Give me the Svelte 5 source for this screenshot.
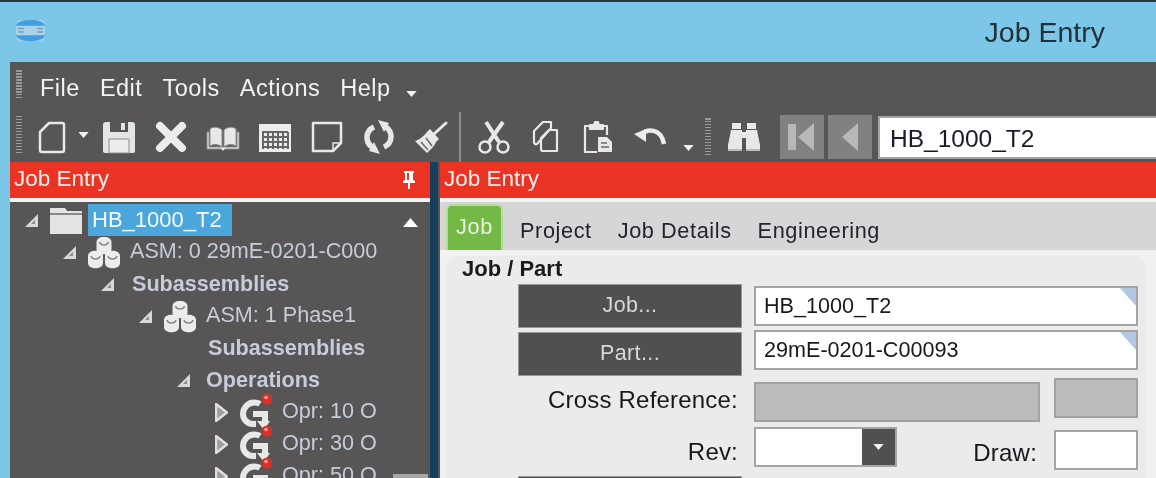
<script>
	const menus = ['File', 'Edit', 'Tools', 'Actions', 'Help'];
	const tabs = ['Project', 'Job Details', 'Engineering'];

	// indent = left edge of the row content, in px from the panel
	const tree = [
		{ indent: 15, arrow: 'open', icon: 'folder', label: 'HB_1000_T2', selected: true },
		{ indent: 53, arrow: 'open', icon: 'asm', label: 'ASM: 0 29mE-0201-C000' },
		{ indent: 91, arrow: 'open', label: 'Subassemblies', bold: true },
		{ indent: 129, arrow: 'open', icon: 'asm', label: 'ASM: 1 Phase1' },
		{ indent: 167, arrow: 'none', label: 'Subassemblies', bold: true },
		{ indent: 167, arrow: 'open', label: 'Operations', bold: true, tight: true },
		{ indent: 205, arrow: 'closed', icon: 'opr', label: 'Opr: 10 O' },
		{ indent: 205, arrow: 'closed', icon: 'opr', label: 'Opr: 30 O' },
		{ indent: 205, arrow: 'closed', icon: 'opr', label: 'Opr: 50 O' }
	];
</script>

{#snippet caret()}
	<svg class="caret" viewBox="0 0 12 7"><path d="M0 0h12L6 7z" fill="#f2f2f2" /></svg>
{/snippet}

{#snippet grip(cls)}
	<span class="grip {cls}"></span>
{/snippet}

{#snippet cup(x, y)}
	<path d="M{x} {y + 5}c0-7 15-7 15 0v7c0 7-15 7-15 0z" fill="#ececec" />
	<path d="M{x + 3} {y + 5}c1 4 8 4 9 0" fill="none" stroke="#8b8b8b" stroke-width="1.500" />
{/snippet}

{#snippet asmIcon()}
	<svg class="ticon asm" viewBox="0 0 32 32">
		{@render cup(8.500, 0)}
		{@render cup(0, 14)}
		{@render cup(17, 14)}
	</svg>
{/snippet}

{#snippet folderIcon()}
	<svg class="ticon folder" viewBox="0 0 32 28">
		<path d="M0 2h15l2 3h15v23H0z" fill="#e4e4e4" />
		<path d="M0 8h32" stroke="#6b6b6b" stroke-width="1.500" />
	</svg>
{/snippet}

{#snippet oprIcon()}
	<svg class="ticon opr" viewBox="0 0 32 38">
		<path d="M20 11c-1.500-1-3-1.500-6-1.500C8 9.500 3 15 3 21s5 10 10 10h3" fill="none" stroke="#e8e8e8" stroke-width="6" />
		<path d="M13 18h15v10l2 0-6 9-7-9h5v-4h-9z" fill="#e8e8e8" />
		<circle cx="27" cy="6" r="5.500" fill="#d5322b" />
		<circle cx="26" cy="4.500" r="1.800" fill="#f3a5a0" />
	</svg>
{/snippet}

<div class="window">
	<header class="titlebar">
		<svg class="appicon" viewBox="0 0 32 26">
			<rect x="1" y="2" width="30" height="22" rx="5" fill="#a9d3ea" />
			<path d="M1 8c0-8 30-8 30 0z" fill="#3f9fe0" />
			<path d="M1 18h30c0 8-30 8-30 0z" fill="#3f9fe0" />
			<path d="M3 11h6M3 14.500h6M23 11h6M23 14.500h6" stroke="#7f9db0" stroke-width="1.500" />
		</svg>
		<h1>Job Entry</h1>
	</header>

	<div class="shell">
		<div class="menubar">
			{@render grip('g-menu')}
			<nav>
				{#each menus as m}
					<span>{m}</span>
				{/each}
			</nav>
			<span class="menu-caret">{@render caret()}</span>
		</div>

		<div class="toolbar">
			{@render grip('g-tool')}
			<svg class="ic first" viewBox="0 0 34 34" fill="none" stroke="#e8e8e8" stroke-width="2.500" stroke-linejoin="round">
				<path d="M14 3h13a2 2 0 0 1 2 2v25a2 2 0 0 1-2 2H7a2 2 0 0 1-2-2V12z" />
			</svg>
			<span class="tb-caret">{@render caret()}</span>
			<svg class="ic" viewBox="0 0 34 34">
				<path d="M1 5a3 3 0 0 1 3-3h26a3 3 0 0 1 3 3v26a2 2 0 0 1-2 2H3a2 2 0 0 1-2-2z" fill="#e4e4e4" />
				<path d="M8 2h18v10H8z" fill="#575556" />
				<path d="M19 3h4v7h-4z" fill="#e4e4e4" />
				<path d="M7 19h20v14H7z" fill="#ececec" stroke="#8f8f8f" />
			</svg>
			<svg class="ic" viewBox="0 0 34 34">
				<path d="M6 6l22 22M28 6L6 28" stroke="#ececec" stroke-width="8" stroke-linecap="round" />
			</svg>
			<svg class="ic" viewBox="0 0 34 34" fill="#e8e8e8" stroke="#8d8d8d" stroke-width="1">
				<path d="M16 10C12 6 6 7 4 9v17c3-2 9-2 12 1z" />
				<path d="M18 10c4-4 10-3 12-1v17c-3-2-9-2-12 1z" />
				<path d="M1 12v17h14l2 2 2-2h14V12h-2v15H3V12z" />
			</svg>
			<svg class="ic" viewBox="0 0 34 34">
				<rect x="1" y="4" width="32" height="28" fill="#ececec" />
				<path d="M4 12h26M4 17h26M4 22h26M4 27h26" stroke="#666" stroke-width="2" />
				<path d="M5 12v17M10 12v17M15 12v17M20 12v17M25 12v17M30 12v17" stroke="#666" stroke-width="2" />
			</svg>
			<svg class="ic note" viewBox="0 0 34 34" fill="none" stroke="#e8e8e8" stroke-width="2.500" stroke-linejoin="round">
				<path d="M3 3h28v20l-8 8H3z" />
				<path d="M31 23h-8v8" stroke-width="1.500" />
			</svg>
			<svg class="ic" viewBox="0 0 34 34">
				<path d="M12 7C3 11 3 22 10 27M22 27c9-4 9-15 2-20" fill="none" stroke="#e8e8e8" stroke-width="5.500" />
				<path d="M16 0l11 3-5 9zM18 34L7 31l5-9z" fill="#e8e8e8" />
			</svg>
			<svg class="ic" viewBox="0 0 34 34">
				<path d="M20 14L32 3" stroke="#e8e8e8" stroke-width="3" stroke-linecap="round" />
				<path d="M16 9l9 10-3 3c-2 5-6 8-9 11L1 21c4-1 9-5 12-9z" fill="#e8e8e8" />
				<path d="M7 22l7 8M12 18l6 8" stroke="#6b6b6b" stroke-width="1.500" />
			</svg>
			<span class="sep"></span>
			<svg class="ic" viewBox="0 0 34 34" fill="none" stroke="#e8e8e8" stroke-width="2.500">
				<path d="M9 2l13 20M26 2L12 22" stroke-width="4" />
				<circle cx="8" cy="27" r="5.500" />
				<circle cx="26" cy="27" r="5.500" />
			</svg>
			<svg class="ic" viewBox="0 0 34 34" fill="none" stroke="#e8e8e8" stroke-width="2.200" stroke-linejoin="round">
				<path d="M14 2h8v6L8 24a2 2 0 0 1-3-2V11z" />
				<path d="M20 10h8v21H14a2 2 0 0 1-2-2V18z" />
			</svg>
			<svg class="ic" viewBox="0 0 34 34" fill="none" stroke="#e8e8e8" stroke-width="2.200" stroke-linejoin="round">
				<path d="M9 6H4v26h12" />
				<path d="M21 6h5v9" />
				<path d="M9 9V5h4l1-3h3l1 3h4v4z" fill="#e8e8e8" />
				<path d="M17 17h9l5 5v10H17z" fill="#e8e8e8" stroke="none" />
				<path d="M20 23h6M20 27h8" stroke="#6b6b6b" stroke-width="1.500" />
			</svg>
			<svg class="ic" viewBox="0 0 34 34" fill="none">
				<path d="M8 15c6-7 20-7 23 9" stroke="#ececec" stroke-width="4.500" />
				<path d="M1 14l12-5 0 13z" fill="#ececec" />
			</svg>
			<span class="tb-caret low">{@render caret()}</span>
			{@render grip('g-tool2')}
			<svg class="ic binos" viewBox="0 0 34 34" fill="#e8e8e8">
				<path d="M5 3h9v6H5zM20 3h9v6h-9z" />
				<path d="M4 10h11v21H1v-6zM19 10h11l3 15v6H19z" />
				<path d="M15 12h4v6h-4z" />
				<path d="M1 30h14M19 30h14" stroke="#8d8d8d" stroke-width="1" />
			</svg>
			<button class="nav first-nav" aria-label="First">
				<svg viewBox="0 0 44 44"><path d="M8 9h8v26H8zM34 8v28L18 22z" fill="#b8b8b8" /></svg>
			</button>
			<button class="nav" aria-label="Previous">
				<svg viewBox="0 0 44 44"><path d="M30 8v28L14 22z" fill="#b8b8b8" /></svg>
			</button>
			<div class="search">HB_1000_T2</div>
		</div>

		<div class="panes">
			<aside class="left">
				<div class="pane-head">
					<span>Job Entry</span>
					<svg class="pin" viewBox="0 0 14 19">
						<path d="M2 1h10v2h-1v7l2 1v2H8v6H6v-6H1v-2l2-1V3H2zM5 3v7h2V3z" fill="#fff" />
					</svg>
				</div>
				<div class="tree">
					<svg class="scroll-up" viewBox="0 0 15 9"><path d="M0 9L7.500 0 15 9z" fill="#fff" /></svg>
					<span class="thumb"></span>
					{#each tree as row}
						<div class="row" style="padding-left: {row.indent}px">
							{#if row.arrow === 'open'}
								<svg class="arrow" viewBox="0 0 13 13">
									<path d="M13 0v13H0z" fill="#d8d8d8" />
									<path d="M10 6v4H6z" fill="#8a8a8a" />
								</svg>
							{:else if row.arrow === 'closed'}
								<svg class="arrow closed" viewBox="0 0 13 19">
									<path d="M1 1l11 8.500L1 18z" fill="#9c9c9c" stroke="#e0e0e0" stroke-width="2.500" />
								</svg>
							{:else}
								<span class="arrow"></span>
							{/if}
							{#if row.icon === 'folder'}
								{@render folderIcon()}
							{:else if row.icon === 'asm'}
								{@render asmIcon()}
							{:else if row.icon === 'opr'}
								{@render oprIcon()}
							{/if}
							<span class="label" class:bold={row.bold} class:tight={row.tight} class:selected={row.selected}>{row.label}</span>
						</div>
					{/each}
				</div>
			</aside>

			<div class="divider"></div>

			<main class="right">
				<div class="pane-head">
					<span>Job Entry</span>
				</div>
				<div class="tabs">
					<span class="tab active">Job</span>
					{#each tabs as t}
						<span class="tab">{t}</span>
					{/each}
				</div>
				<section class="group">
					<h2>Job / Part</h2>
					<div class="form">
						<button class="btn">Job...</button>
						<div class="field first-field"><span>HB_1000_T2</span></div>
						<button class="btn">Part...</button>
						<div class="field second-field"><span>29mE-0201-C00093</span></div>
						<span class="cap cross">Cross Reference:</span>
						<div class="split">
							<div class="off wide"></div>
							<div class="off short"></div>
						</div>
						<span class="cap rev">Rev:</span>
						<div class="split">
							<div class="combo">
								<span class="combo-btn">{@render caret()}</span>
							</div>
							<span class="cap draw">Draw:</span>
							<div class="draw-box"></div>
						</div>
						<button class="btn" aria-label="More"></button>
						<div class="field off-field"></div>
					</div>
				</section>
			</main>
		</div>
	</div>
</div>

<style>
	:global(body) {
		margin: 0;
		overflow: hidden;
	}

	.window {
		width: 1156px;
		height: 478px;
		overflow: hidden;
		display: flex;
		flex-direction: column;
		background: #7cc7e8;
		border-top: 2px solid #2e3542;
		box-sizing: border-box;
		font-family: 'Liberation Sans', Arial, sans-serif;
		filter: blur(0.45px);
	}

	.titlebar {
		height: 60px;
		flex: none;
		display: flex;
		align-items: center;
		justify-content: space-between;
		padding: 0 51px 0 15px;
		box-sizing: border-box;
	}

	.appicon {
		width: 31px;
		height: 25px;
		margin-top: -4px;
	}

	h1 {
		margin: 0;
		font-size: 28.500px;
		font-weight: 400;
		color: #23313b;
	}

	.shell {
		flex: 1;
		min-height: 0;
		margin-left: 10px;
		background: #575556;
		display: flex;
		flex-direction: column;
	}

	.menubar {
		height: 50px;
		flex: none;
		display: flex;
		align-items: center;
		position: relative;
		padding-left: 30px;
		box-sizing: border-box;
		color: #f2f3f7;
		font-size: 23.500px;
		letter-spacing: 0.500px;
	}

	nav {
		display: flex;
		gap: 20px;
		margin-top: 2px;
	}

	.menu-caret {
		margin: 14px 0 0 15px;
		display: flex;
	}

	.caret {
		width: 11px;
		height: 6px;
		display: block;
	}

	.grip {
		position: absolute;
		left: 6px;
		width: 6px;
		background: repeating-linear-gradient(to bottom, #9c9a9b 0 1.500px, #575556 1.500px 3px);
	}

	.g-menu {
		top: 8px;
		height: 30px;
	}

	.toolbar {
		height: 50px;
		flex: none;
		display: flex;
		align-items: center;
		position: relative;
		padding-left: 25px;
		box-sizing: border-box;
	}

	.g-tool {
		top: 4px;
		height: 39px;
	}

	.g-tool2 {
		position: static;
		height: 38px;
		flex: none;
		margin: 0 16px 0 11px;
	}

	.ic {
		width: 34px;
		height: 34px;
		flex: none;
		margin-right: 18px;
		margin-top: -1px;
	}

	.ic.first {
		margin-right: 9px;
	}

	.ic.binos {
		margin-right: 19px;
	}

	.tb-caret {
		display: flex;
		margin-right: 13px;
		margin-top: -4px;
	}

	.tb-caret.low {
		margin: 22px 0 0 -2px;
	}

	.sep {
		width: 2px;
		height: 50px;
		flex: none;
		background: #8f8e8e;
		margin: 0 16px 0 -7px;
	}

	.nav {
		width: 44px;
		height: 44px;
		flex: none;
		padding: 0;
		border: none;
		background: #828182;
		margin-right: 4px;
	}

	.nav svg {
		width: 44px;
		height: 44px;
		display: block;
	}

	.search {
		flex: 1;
		height: 43px;
		margin-left: 2px;
		background: #fff;
		border: 2px solid #a5a5a5;
		border-right: none;
		box-sizing: border-box;
		padding-left: 10px;
		line-height: 41px;
		font-size: 24.500px;
		color: #1a1a2a;
	}

	.panes {
		flex: 1;
		min-height: 0;
		display: flex;
	}

	.left {
		width: 420px;
		flex: none;
		display: flex;
		flex-direction: column;
	}

	.divider {
		width: 10px;
		flex: none;
		background: linear-gradient(to right, #173f5d 0 80%, #575556 80%);
	}

	.right {
		flex: 1;
		min-width: 0;
		display: flex;
		flex-direction: column;
		background: #f0f1f0;
	}

	.pane-head {
		height: 34px;
		flex: none;
		background: #ea3323;
		border-bottom: 4px solid #f4f4f4;
		color: #fbeeee;
		font-size: 22.500px;
		display: flex;
		align-items: center;
		justify-content: space-between;
		padding: 0 14px 2px 4px;
		box-sizing: content-box;
	}

	.pin {
		width: 14px;
		height: 19px;
	}

	.tree {
		flex: 1;
		min-height: 0;
		position: relative;
		padding-top: 2px;
		overflow: hidden;
	}

	.scroll-up {
		position: absolute;
		left: 393px;
		top: 16px;
		width: 15px;
		height: 9px;
	}

	.thumb {
		position: absolute;
		left: 383px;
		top: 272px;
		width: 35px;
		height: 8px;
		background: #a7a7a7;
	}

	.row {
		height: 32px;
		display: flex;
		align-items: center;
		white-space: nowrap;
		font-size: 21.600px;
		color: #c6ccd8;
	}

	.arrow {
		width: 13px;
		height: 13px;
		flex: none;
		display: block;
	}

	.arrow.closed {
		height: 19px;
	}

	.ticon {
		flex: none;
		display: block;
	}

	.folder {
		width: 32px;
		height: 28px;
		margin: 0 6px 0 12px;
	}

	.asm {
		width: 32px;
		height: 32px;
		margin: 2px 6px 0 12px;
	}

	.opr {
		width: 32px;
		height: 38px;
		margin: 0 6px 0 12px;
	}

	.label {
		padding: 0 4px;
		line-height: 32px;
		margin-top: -3px;
	}

	.label.bold {
		font-weight: 700;
		padding-left: 18px;
		margin-top: 0;
	}

	.label.tight {
		padding-left: 16px;
	}

	.label.selected {
		background: #4ba6dc;
		color: #f4f8fc;
		margin-top: 0;
		height: 32px;
		padding: 0 10px 0 4px;
		font-size: 22px;
	}

	.tabs {
		height: 48px;
		flex: none;
		background: #d6d6d6;
		display: flex;
		align-items: flex-end;
		padding: 0 0 0 6px;
		box-sizing: border-box;
		font-size: 21.700px;
		letter-spacing: 0.600px;
		color: #20242e;
	}

	.tab {
		margin-right: 26px;
		padding-bottom: 6px;
	}

	.tab.active {
		width: 57px;
		height: 46px;
		box-sizing: border-box;
		background: #74b846;
		border: 2px solid #b4dc9c;
		border-bottom: none;
		border-radius: 6px 6px 0 0;
		color: #e8f2dc;
		text-align: center;
		padding: 8px 0 0;
		margin-right: 17px;
	}

	.group {
		flex: 1;
		margin: 6px 10px 0 6px;
		background: #ebebeb;
		border-radius: 9px 9px 0 0;
		padding: 0 8px 0 16px;
		min-height: 0;
	}

	h2 {
		margin: 0;
		height: 28px;
		line-height: 26px;
		font-size: 22px;
		font-weight: 700;
		color: #1a1a1a;
	}

	.form {
		display: grid;
		grid-template-columns: 224px 1fr;
		column-gap: 12px;
		row-gap: 4px;
		margin-left: 56px;
		grid-auto-rows: 44px;
	}

	.btn {
		background: #524f50;
		border: 1px solid #989697;
		color: #d8d8d8;
		font: inherit;
		font-size: 21.500px;
		padding: 0 0 2px;
		letter-spacing: 0.400px;
	}

	.field {
		background: #fff;
		border: 2px solid #a4a4a4;
		height: 40px;
		box-sizing: border-box;
		font-size: 21.600px;
		color: #18181f;
		line-height: 36px;
		padding-left: 8px;
		position: relative;
	}

	.first-field {
		margin-top: 2px;
	}

	.second-field {
		margin-top: -2px;
	}

	.field::after {
		content: '';
		position: absolute;
		top: 0;
		right: 0;
		border-top: 18px solid #b4c6e0;
		border-left: 16px solid transparent;
	}

	.field.off-field {
		background: #bbb;
		margin-top: 2px;
	}

	.cap {
		font-size: 24px;
		color: #17171d;
		text-align: right;
		padding-right: 4px;
		letter-spacing: 0.200px;
	}

	.cross {
		line-height: 40px;
	}

	.rev {
		line-height: 48px;
	}

	.split {
		display: flex;
		align-items: flex-start;
	}

	.off {
		background: #bbb;
		border: 2px solid #a2a2a2;
		box-sizing: border-box;
		flex: none;
	}

	.wide {
		width: 286px;
		height: 40px;
		margin-top: 2px;
	}

	.short {
		width: 84px;
		height: 40px;
		margin-left: 14px;
		margin-top: -2px;
	}

	.combo {
		width: 143px;
		height: 40px;
		box-sizing: border-box;
		background: #fff;
		border: 2px solid #a4a4a4;
		display: flex;
		justify-content: flex-end;
		flex: none;
		margin-top: -1px;
	}

	.combo-btn {
		width: 33px;
		background: #524f50;
		display: flex;
		align-items: center;
		justify-content: center;
	}

	.draw {
		width: 157px;
		flex: none;
		line-height: 50px;
		padding-right: 17px;
		box-sizing: border-box;
	}

	.draw-box {
		width: 84px;
		height: 40px;
		flex: none;
		box-sizing: border-box;
		background: #fff;
		border: 2px solid #a4a4a4;
		margin-top: 2px;
	}
</style>
